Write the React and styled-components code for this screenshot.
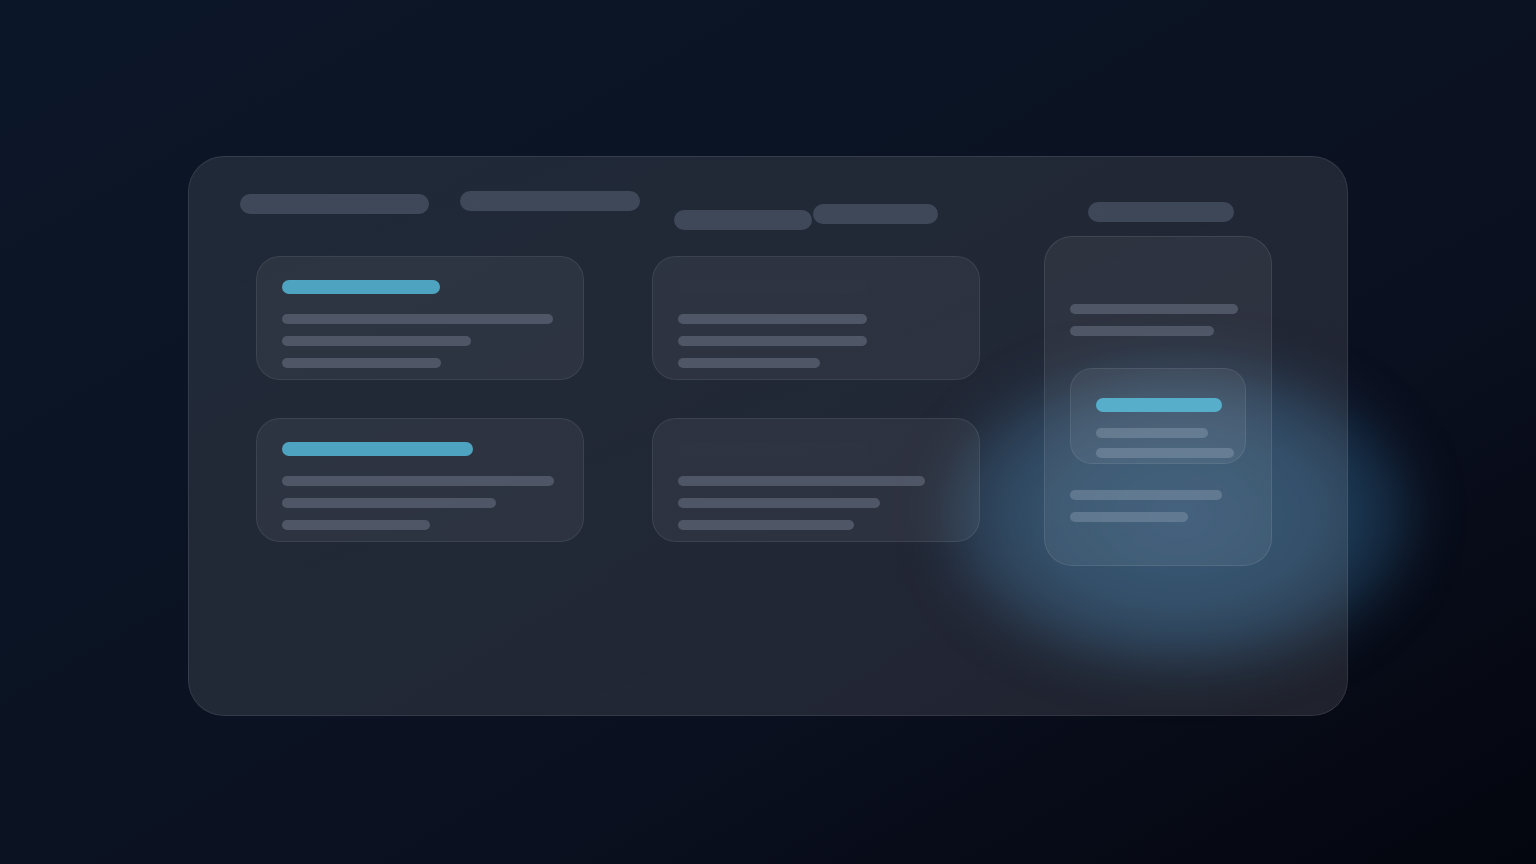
import React from "react";
import styled, { createGlobalStyle } from "styled-components";

const Global = createGlobalStyle`
  html, body { margin: 0; padding: 0; }
  body {
    font-family: "Inter", "Liberation Sans", sans-serif;
    background: #0a1222;
  }
`;

const Page = styled.main`
  position: relative;
  width: 1536px;
  height: 864px;
  overflow: hidden;
  display: flex;
  align-items: center;
  justify-content: center;
  padding-top: 8px;
  box-sizing: border-box;
  background: linear-gradient(150deg, #0b1628 0%, #0b1424 35%, #0b1020 65%, #03060e 100%);
`;

const Glow = styled.div`
  position: absolute;
  left: 945px;
  top: 360px;
  width: 470px;
  height: 310px;
  border-radius: 50%;
  background: radial-gradient(ellipse at center, rgba(40, 78, 112, 0.92) 0%, rgba(36, 72, 104, 0.82) 45%, rgba(26, 58, 86, 0.5) 68%, rgba(20, 45, 70, 0) 100%);
  filter: blur(24px);
`;

const Panel = styled.section`
  position: relative;
  width: 1160px;
  height: 560px;
  box-sizing: border-box;
  border-radius: 36px;
  border: 1px solid rgba(255, 255, 255, 0.09);
  background: linear-gradient(160deg, rgba(255, 255, 255, 0.085) 0%, rgba(255, 255, 255, 0.095) 60%, rgba(255, 255, 255, 0.1) 100%);
  display: flex;
  flex-direction: column;
`;

const Header = styled.div`
  display: flex;
  align-items: flex-start;
  padding: 34px 0 0 51px;
  height: 45px;
`;

const HeadBar = styled.div`
  flex: none;
  width: ${(p) => p.$w}px;
  height: 20px;
  border-radius: 10px;
  margin-left: ${(p) => p.$ml}px;
  margin-top: ${(p) => p.$mt}px;
  background: rgba(92, 104, 122, 0.5);
`;

const Body = styled.div`
  display: flex;
  align-items: flex-start;
  padding-left: 67px;
`;

const Column = styled.div`
  flex: none;
  display: flex;
  flex-direction: column;
  gap: 38px;
  margin-left: ${(p) => p.$ml || 0}px;
  margin-top: ${(p) => p.$mt || 0}px;
`;

const Card = styled.div`
  width: 328px;
  height: 124px;
  box-sizing: border-box;
  padding: 23px 25px 0;
  border-radius: 24px;
  border: 1px solid rgba(255, 255, 255, 0.08);
  background: rgba(255, 255, 255, 0.055);
  display: flex;
  flex-direction: column;
  gap: 12px;
`;

const Title = styled.div`
  width: ${(p) => p.$w}px;
  height: 14px;
  border-radius: 7px;
  margin-bottom: 8px;
  background: ${(p) => (p.$ghost ? "rgba(255,255,255,0.008)" : p.$bright ? "#57aecb" : "#4ea4c0")};
`;

const Line = styled.div`
  width: ${(p) => p.$w}px;
  height: 10px;
  border-radius: 5px;
  background: ${(p) => (p.$light ? "rgba(140, 160, 178, 0.42)" : "rgba(130, 140, 158, 0.4)")};
`;

const TallCard = styled.div`
  width: 228px;
  height: 330px;
  box-sizing: border-box;
  padding: 67px 25px 0;
  border-radius: 28px;
  border: 1px solid rgba(255, 255, 255, 0.09);
  background: rgba(255, 255, 255, 0.06);
  display: flex;
  flex-direction: column;
`;

const LineStack = styled.div`
  display: flex;
  flex-direction: column;
  gap: 12px;
  margin-top: ${(p) => p.$mt || 0}px;
`;

const InnerCard = styled.div`
  width: 176px;
  height: 96px;
  box-sizing: border-box;
  margin-top: 32px;
  padding: 29px 0 0 25px;
  border-radius: 22px;
  border: 1px solid rgba(255, 255, 255, 0.08);
  background: rgba(255, 255, 255, 0.06);
  display: flex;
  flex-direction: column;
`;

const InnerTitle = styled(Title)`
  margin-bottom: 16px;
`;

const InnerLines = styled.div`
  display: flex;
  flex-direction: column;
  gap: 10px;
`;

const leftCards = [
  { title: 158, lines: [271, 189, 159] },
  { title: 191, lines: [272, 214, 148] },
];
const midCards = [
  { title: 190, ghost: true, lines: [189, 189, 142] },
  { title: 190, ghost: true, lines: [247, 202, 176] },
];

function PlaceholderCard({ data }) {
  return (
    <Card>
      <Title $w={data.title} $ghost={data.ghost} />
      {data.lines.map((w, i) => (
        <Line key={i} $w={w} />
      ))}
    </Card>
  );
}

export default function App() {
  return (
    <>
      <Global />
      <Page>
        <Glow />
        <Panel>
          <Header>
            <HeadBar $w={189} $ml={0} $mt={3} />
            <HeadBar $w={180} $ml={31} $mt={0} />
            <HeadBar $w={138} $ml={34} $mt={19} />
            <HeadBar $w={125} $ml={1} $mt={13} />
            <HeadBar $w={146} $ml={150} $mt={11} />
          </Header>
          <Body>
            <Column $mt={20}>
              {leftCards.map((c, i) => (
                <PlaceholderCard key={i} data={c} />
              ))}
            </Column>
            <Column $ml={68} $mt={20}>
              {midCards.map((c, i) => (
                <PlaceholderCard key={i} data={c} />
              ))}
            </Column>
            <Column $ml={64}>
              <TallCard>
                <LineStack>
                  <Line $w={168} />
                  <Line $w={144} />
                </LineStack>
                <InnerCard>
                  <InnerTitle $w={126} $bright />
                  <InnerLines>
                    <Line $w={112} $light />
                    <Line $w={138} $light />
                  </InnerLines>
                </InnerCard>
                <LineStack $mt={26}>
                  <Line $w={152} $light />
                  <Line $w={118} $light />
                </LineStack>
              </TallCard>
            </Column>
          </Body>
        </Panel>
      </Page>
    </>
  );
}
